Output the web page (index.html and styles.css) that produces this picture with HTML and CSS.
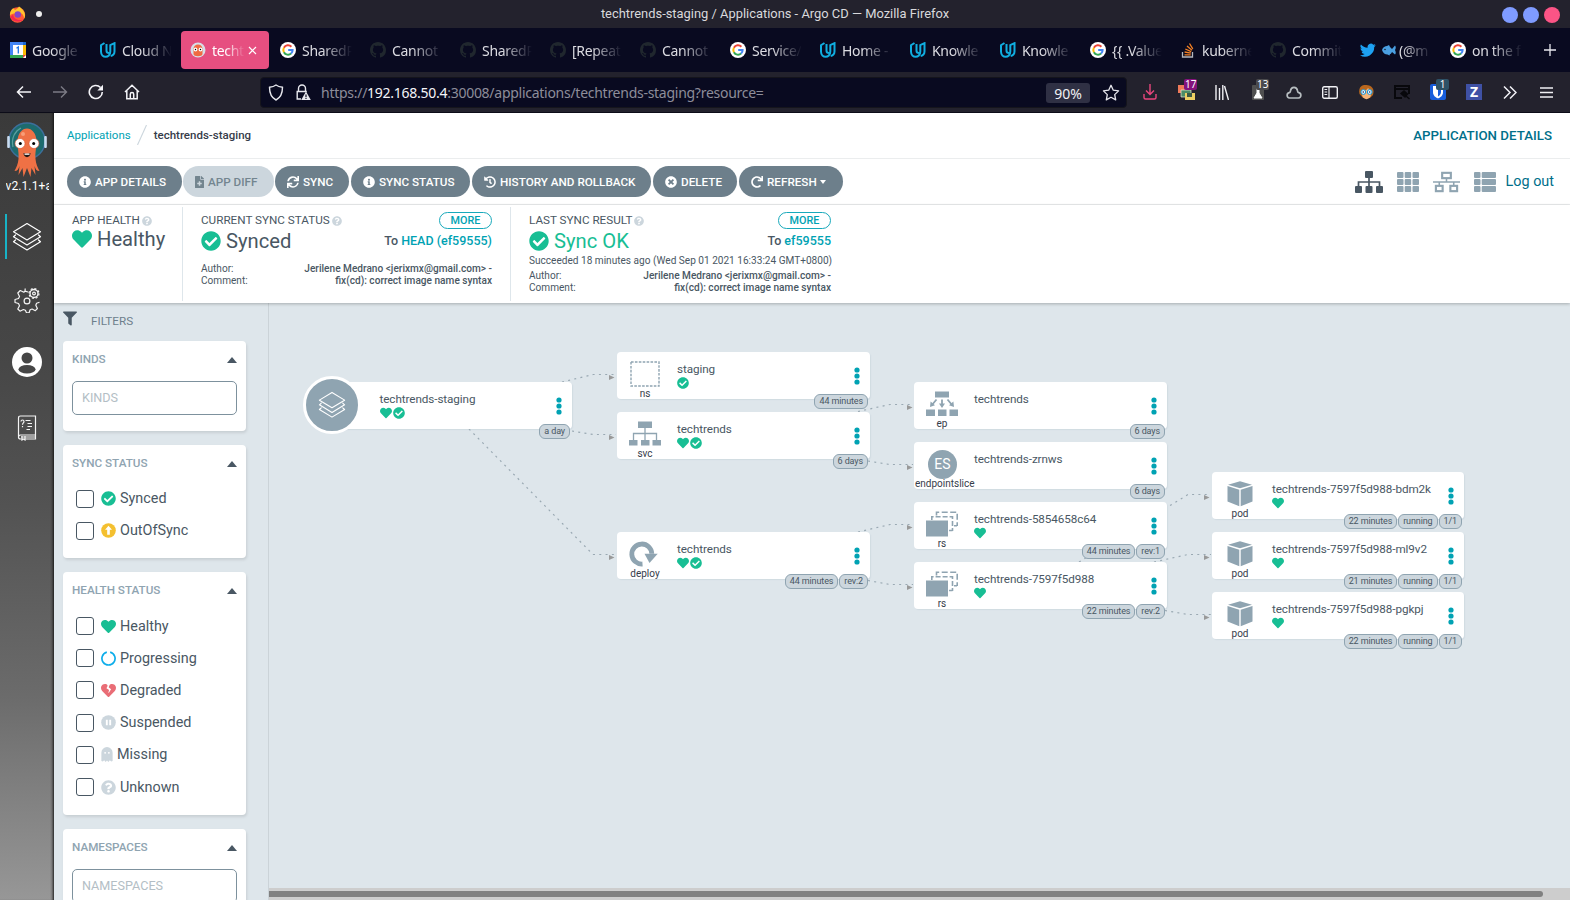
FILE: index.html
```html
<!DOCTYPE html>
<html lang="en">
<head>
<meta charset="utf-8">
<title>techtrends-staging / Applications - Argo CD</title>
<link rel="stylesheet" href="styles.css">
</head>
<body>
<svg class="defs" width="0" height="0" aria-hidden="true">
  <symbol id="i-check" viewBox="0 0 512 512"><path d="M504 256c0 136.967-111.033 248-248 248S8 392.967 8 256 119.033 8 256 8s248 111.033 248 248zM227.314 387.314l184-184c6.248-6.248 6.248-16.379 0-22.627l-22.627-22.627c-6.248-6.249-16.379-6.249-22.628 0L216 308.118l-70.059-70.059c-6.248-6.248-16.379-6.248-22.628 0l-22.627 22.627c-6.248 6.248-6.248 16.379 0 22.627l104 104c6.249 6.249 16.379 6.249 22.628.001z"/></symbol>
  <symbol id="i-heart" viewBox="0 0 512 512"><path d="M462.3 62.6C407.5 15.9 326 24.3 275.7 76.2L256 96.5l-19.7-20.3C186.1 24.3 104.5 15.9 49.7 62.6c-62.8 53.6-66.1 149.8-9.9 207.9l193.5 199.8c12.5 12.9 32.8 12.9 45.3 0l193.5-199.8c56.3-58.1 53-154.3-9.8-207.9z"/></symbol>
  <symbol id="i-broken" viewBox="0 0 512 512"><path d="M462.3 62.6C407.5 15.9 326 24.3 275.7 76.2L256 96.5l-19.7-20.3C186.1 24.3 104.5 15.9 49.7 62.6c-62.8 53.6-66.1 149.8-9.9 207.9l193.5 199.8c12.5 12.9 32.8 12.9 45.3 0l193.5-199.8c56.3-58.1 53-154.3-9.8-207.9z"/><path d="M300 50l-40 96 84 64-80 130-12-20 24-84-90-60 42-86-28-50 30 10 20 26z" fill="#fff"/></symbol>
  <symbol id="i-info" viewBox="0 0 512 512"><path d="M256 8C119.043 8 8 119.083 8 256c0 136.997 111.043 248 248 248s248-111.003 248-248C504 119.083 392.957 8 256 8zm0 110c23.196 0 42 18.804 42 42s-18.804 42-42 42-42-18.804-42-42 18.804-42 42-42zm56 254c0 6.627-5.373 12-12 12h-88c-6.627 0-12-5.373-12-12v-24c0-6.627 5.373-12 12-12h12v-64h-12c-6.627 0-12-5.373-12-12v-24c0-6.627 5.373-12 12-12h64c6.627 0 12 5.373 12 12v100h12c6.627 0 12 5.373 12 12v24z"/></symbol>
  <symbol id="i-times" viewBox="0 0 512 512"><path d="M256 8C119 8 8 119 8 256s111 248 248 248 248-111 248-248S393 8 256 8zm121.6 313.1c4.7 4.7 4.7 12.3 0 17L338 377.6c-4.7 4.7-12.3 4.7-17 0L256 312l-65.1 65.6c-4.7 4.7-12.3 4.7-17 0L134.4 338c-4.7-4.7-4.7-12.3 0-17l65.6-65-65.6-65.1c-4.7-4.7-4.7-12.3 0-17l39.6-39.6c4.7-4.7 12.3-4.7 17 0l65 65.7 65.1-65.6c4.7-4.7 12.3-4.7 17 0l39.6 39.6c4.7 4.7 4.7 12.3 0 17L312 256l65.6 65.1z"/></symbol>
  <symbol id="i-redo" viewBox="0 0 512 512"><path d="M500.33 0h-47.41a12 12 0 0 0-12 12.57l4 82.76A247.42 247.42 0 0 0 256 8C119.34 8 7.9 119.53 8 256.19 8.1 393.07 119.1 504 256 504a247.1 247.1 0 0 0 166.18-63.91 12 12 0 0 0 .48-17.43l-34-34a12 12 0 0 0-16.38-.55A176 176 0 1 1 402.1 157.8l-101.53-4.87a12 12 0 0 0-12.57 12v47.41a12 12 0 0 0 12 12h200.33a12 12 0 0 0 12-12V12a12 12 0 0 0-12-12z"/></symbol>
  <symbol id="i-sync" viewBox="0 0 512 512"><path d="M440.65 12.57l4 82.77A247.16 247.16 0 0 0 255.83 8C134.73 8 33.91 94.92 12.29 209.82A12 12 0 0 0 24.09 224h49.05a12 12 0 0 0 11.67-9.26 175.91 175.91 0 0 1 317-56.94l-101.46-4.86a12 12 0 0 0-12.57 12v47.41a12 12 0 0 0 12 12H500a12 12 0 0 0 12-12V12a12 12 0 0 0-12-12h-47.37a12 12 0 0 0-11.98 12.57zM255.83 432a175.61 175.61 0 0 1-146-77.8l101.8 4.87a12 12 0 0 0 12.57-12v-47.4a12 12 0 0 0-12-12H12a12 12 0 0 0-12 12V500a12 12 0 0 0 12 12h47.35a12 12 0 0 0 12-12.6l-4.15-82.57A247.17 247.17 0 0 0 255.83 504c121.11 0 221.93-86.92 243.55-201.82a12 12 0 0 0-11.8-14.18h-49.05a12 12 0 0 0-11.67 9.26A175.86 175.86 0 0 1 255.83 432z"/></symbol>
  <symbol id="i-history" viewBox="0 0 512 512"><path d="M504 255.531c.253 136.64-111.18 248.372-247.82 248.468-59.015.042-113.223-20.53-155.822-54.911-11.077-8.94-11.905-25.541-1.839-35.607l11.267-11.267c8.609-8.609 22.353-9.551 31.891-1.984C173.062 425.135 212.781 440 256 440c101.705 0 184-82.311 184-184 0-101.705-82.311-184-184-184-48.814 0-93.149 18.969-126.068 49.932l50.754 50.754c10.08 10.08 2.941 27.314-11.313 27.314H24c-8.837 0-16-7.163-16-16V38.627c0-14.254 17.234-21.393 27.314-11.314l49.372 49.372C129.209 34.136 189.552 8 256 8c136.81 0 247.747 110.78 248 247.531zm-180.912 78.784l9.823-12.63c8.138-10.463 6.253-25.542-4.21-33.679L288 256.349V152c0-13.255-10.745-24-24-24h-16c-13.255 0-24 10.745-24 24v135.651l65.409 50.874c10.463 8.137 25.541 6.253 33.679-4.21z"/></symbol>
  <symbol id="i-file" viewBox="0 0 384 512"><path d="M377 105L279.1 7c-4.5-4.5-10.6-7-17-7H256v128h128v-6.1c0-6.3-2.5-12.4-7-16.9zM224 136V0H24C10.7 0 0 10.7 0 24v464c0 13.3 10.7 24 24 24h336c13.3 0 24-10.7 24-24V160H248c-13.2 0-24-10.8-24-24zm64 160v48c0 4.400-3.600 8-8 8h-56v56c0 4.400-3.600 8-8 8h-48c-4.400 0-8-3.600-8-8v-56h-56c-4.400 0-8-3.600-8-8v-48c0-4.400 3.600-8 8-8h56v-56c0-4.400 3.600-8 8-8h48c4.400 0 8 3.600 8 8v56h56c4.400 0 8 3.600 8 8z"/></symbol>
  <symbol id="i-filter" viewBox="0 0 512 512"><path d="M487.976 0H24.028C2.71 0-8.047 25.866 7.058 40.971L192 225.941V432c0 7.831 3.821 15.17 10.237 19.662l80 55.98C298.02 518.69 320 507.493 320 487.98V225.941l184.947-184.97C520.021 25.896 509.338 0 487.976 0z"/></symbol>
  <symbol id="i-question" viewBox="0 0 512 512"><path d="M504 256c0 136.997-111.043 248-248 248S8 392.997 8 256C8 119.083 119.043 8 256 8s248 111.083 248 248zM262.655 90c-54.497 0-89.255 22.957-116.549 63.758-3.536 5.286-2.353 12.415 2.715 16.258l34.699 26.31c5.205 3.947 12.621 3.008 16.665-2.122 17.864-22.658 30.113-35.797 57.303-35.797 20.429 0 45.698 13.148 45.698 32.958 0 14.976-12.363 22.667-32.534 33.976C247.128 238.528 216 254.941 216 296v4c0 6.627 5.373 12 12 12h56c6.627 0 12-5.373 12-12v-1.333c0-28.462 83.186-29.647 83.186-106.667 0-58.002-60.165-102-116.531-102zM256 338c-25.365 0-46 20.635-46 46 0 25.364 20.635 46 46 46s46-20.636 46-46c0-25.365-20.635-46-46-46z"/></symbol>
  <symbol id="i-up" viewBox="0 0 16 16"><circle cx="8" cy="8" r="7.8"/><path d="M8 3L4.300 7.300h2.300v5.200h2.800V7.300h2.300z" fill="#fff"/></symbol>
  <symbol id="i-pause" viewBox="0 0 16 16"><circle cx="8" cy="8" r="7.800"/><path d="M5.200 5h2v6h-2zM8.800 5h2v6h-2z" fill="#fff"/></symbol>
  <symbol id="i-notch" viewBox="0 0 16 16"><path d="M6.200 1.200A7 7 0 1 0 9.800 1.200" fill="none" stroke="#0dadea" stroke-width="1.800"/></symbol>
  <symbol id="i-ghost" viewBox="0 0 12 16"><path d="M0 15V6a6 6 0 0 1 12 0v9l-1.500.500-1.500-1.500-1.500 2L6 14.500 4.500 16 3 14l-1.500 1.500z"/><circle cx="4" cy="6.200" r="1" fill="#fff"/><circle cx="8" cy="6.200" r="1" fill="#fff"/></symbol>
  <symbol id="i-layers" viewBox="0 0 30 30"><g fill="none" stroke="#fff" stroke-width="1.200" stroke-linejoin="round" stroke-linecap="round"><path d="M15 1.500L28.500 9.800 15 18 1.500 9.800zM3.500 13L1.500 14.800 15 23l13.500-8.200L26.500 13M3.500 18L1.500 19.800 15 28l13.500-8.200L26.500 18"/></g></symbol>
  <symbol id="i-udacity" viewBox="0 0 16 16"><path d="M4.500 1L1 3.200v6.300c0 7 9.300 7 9.300 0V3.200L14.500 1.200v8.300c0 2.600-1.600 4-3.800 4.600M6.500 2v6.800c0 1.600 1.200 2.300 2.600 2.300" fill="none" stroke="#10aee0" stroke-width="2"/></symbol>
  <symbol id="i-github" viewBox="0 0 16 16"><path fill="#20272e" d="M8 0C3.580 0 0 3.580 0 8c0 3.540 2.290 6.530 5.470 7.590.4.070.55-.17.55-.38 0-.19-.01-.82-.01-1.490-2.010.37-2.530-.49-2.690-.94-.09-.23-.48-.94-.82-1.130-.28-.15-.68-.52-.01-.53.63-.01 1.080.58 1.230.82.72 1.210 1.870.87 2.330.66.07-.52.28-.87.51-1.070-1.780-.2-3.640-.89-3.640-3.950 0-.87.31-1.590.82-2.150-.08-.2-.36-1.020.08-2.120 0 0 .67-.21 2.200.82.64-.18 1.320-.27 2-.27s1.360.09 2 .27c1.530-1.040 2.200-.82 2.200-.82.44 1.100.16 1.920.08 2.120.51.56.82 1.270.82 2.150 0 3.070-1.870 3.750-3.650 3.950.29.25.54.73.54 1.480 0 1.070-.01 1.930-.01 2.200 0 .21.15.46.55.38A8.010 8.010 0 0 0 16 8c0-4.420-3.580-8-8-8z"/></symbol>
  <symbol id="i-google" viewBox="0 0 16 16"><circle cx="8" cy="8" r="8" fill="#fff"/><g fill="none" stroke-width="2"><path d="M11.400 4.700A4.700 4.700 0 0 0 3.900 5.800" stroke="#ea4335"/><path d="M3.900 5.800a4.700 4.700 0 0 0 0 4.400" stroke="#fbbc05"/><path d="M3.900 10.200a4.700 4.700 0 0 0 7.200 1.400" stroke="#34a853"/><path d="M11.100 11.600A4.700 4.700 0 0 0 12.600 8H8.200" stroke="#4285f4"/></g></symbol>
  <symbol id="i-ns" viewBox="0 0 32 26"><rect x="2" y="1" width="28" height="24" fill="none" stroke="#8fa4b1" stroke-width="1.400" stroke-dasharray="2.600 1.300"/></symbol>
  <symbol id="i-svc" viewBox="0 0 32 26"><path fill="#8fa4b1" d="M9 .500h14v6.500H9zM0 19h8.500v5.500H0zM12 19h8.500v5.500H12zM23.500 19H32v5.500h-8.500z"/><path d="M16 6v13M4.500 19v-6.500h23V19" fill="none" stroke="#8fa4b1" stroke-width="1.300"/></symbol>
  <symbol id="i-ep" viewBox="0 0 32 26"><path fill="#8fa4b1" d="M9 .500h14v6H9zM0 18.500h9V25H0zM12 18.500h8.500V25H12zM23.500 18.500H32V25h-8.500zM4 16l.6-5.500 4.400 3.800zM28 16l-.6-5.500-4.400 3.800zM13 12.500h6L16 17z"/><path d="M10.500 8.500l-5 6M16 8.500v5M21.500 8.500l5 6" fill="none" stroke="#8fa4b1" stroke-width="1.800"/></symbol>
  <symbol id="i-rs" viewBox="0 0 32 26"><g fill="none" stroke="#8fa4b1" stroke-width="1.600"><path d="M10.500 4.500V1.200H31.200V15" stroke-dasharray="6 2.500"/><path d="M5.800 9V5.800H26.500V20" stroke-dasharray="5 2"/><path d="M23 19.500h3.500M28 14.800h3"/></g><path fill="#8fa4b1" d="M0 9.500h22v16H0z"/></symbol>
  <symbol id="i-deploy" viewBox="0 0 32 26"><path d="M13.500 23A10 10 0 1 1 22.800 12.800" fill="none" stroke="#8fa4b1" stroke-width="4.800"/><path d="M15.500 12.800h13.200L20.500 22z" fill="#8fa4b1"/></symbol>
  <symbol id="i-pod" viewBox="0 0 32 26"><path fill="#8fa4b1" d="M16 .300l12 3.400-12 3.600L4 3.700zM3.500 5l11.800 3.700V25.300L3.500 20.500zM28.500 5L16.700 8.700v16.600l11.800-4.800z"/></symbol>
  <symbol id="i-dots" viewBox="0 0 6 18"><circle cx="3" cy="3" r="2.600"/><circle cx="3" cy="9" r="2.600"/><circle cx="3" cy="15" r="2.600"/></symbol>
</svg>

<header class="titlebar">
  <div class="title-left">
    <svg width="17" height="17" viewBox="0 0 17 17"><circle cx="8.500" cy="9" r="7.700" fill="#ff5a36"/><path d="M1 9C1 4 4 3 4 2l2 2c2-1 3-2 4-3.500 3 2 6 5 6 9 0 2-1 3-1 3 0-4-3-6-6-6-3 1-5 1-8 2.500z" fill="#ffc52e"/><path d="M1.500 11c2 5 9 6 12.500 2.500-4 1.500-9 0-10-5z" fill="#f5284e"/><circle cx="8.800" cy="8.500" r="3.200" fill="#8347c9"/></svg>
    <span class="pin"></span>
  </div>
  <div class="window-title">techtrends-staging / Applications - Argo CD — Mozilla Firefox</div>
  <div class="window-buttons"><span></span><span></span><span class="close"></span></div>
</header>

<nav class="tabs">
  <div class="tab"><svg width="16" height="16" viewBox="0 0 16 16"><path d="M0 0h16v16H0z" fill="#fff"/><path d="M0 0h13v3H3v10H0z" fill="#4285f4"/><path d="M13 3h3v10h-3z" fill="#fbbc04"/><path d="M13 0h3v3h-3z" fill="#1967d2"/><path d="M0 13h13v3H0z" fill="#34a853"/><path d="M13 13h3l-3 3z" fill="#ea4335"/><path d="M6.500 6.200L8.300 5v6.500" fill="none" stroke="#1a73e8" stroke-width="1.300"/></svg><span>Google</span></div>
  <div class="tab"><svg width="16" height="16"><use href="#i-udacity"/></svg><span>Cloud N</span></div>
  <div class="tab active"><svg width="16" height="16" viewBox="0 0 16 16"><circle cx="8" cy="8" r="7.500" fill="#d7dfe8"/><path d="M3.500 7a4.500 4.500 0 0 1 9 0v5c0 3-9 3-9 0z" fill="#ef6b42"/><circle cx="5.500" cy="7.500" r="1.900" fill="#fff"/><circle cx="10.500" cy="7.500" r="1.900" fill="#fff"/><circle cx="5.500" cy="7.500" r=".7"/><circle cx="10.500" cy="7.500" r=".7"/></svg><span>techt</span><svg class="tab-close" width="9" height="9" viewBox="0 0 9 9"><path d="M1 1l7 7M8 1L1 8" stroke="#fff" stroke-width="1.200"/></svg></div>
  <div class="tab"><svg width="16" height="16"><use href="#i-google"/></svg><span>SharedP</span></div>
  <div class="tab"><svg width="16" height="16"><use href="#i-github"/></svg><span>Cannot</span></div>
  <div class="tab"><svg width="16" height="16"><use href="#i-github"/></svg><span>SharedP</span></div>
  <div class="tab"><svg width="16" height="16"><use href="#i-github"/></svg><span>[Repeat</span></div>
  <div class="tab"><svg width="16" height="16"><use href="#i-github"/></svg><span>Cannot</span></div>
  <div class="tab"><svg width="16" height="16"><use href="#i-google"/></svg><span>Service/</span></div>
  <div class="tab"><svg width="16" height="16"><use href="#i-udacity"/></svg><span>Home -</span></div>
  <div class="tab"><svg width="16" height="16"><use href="#i-udacity"/></svg><span>Knowle</span></div>
  <div class="tab"><svg width="16" height="16"><use href="#i-udacity"/></svg><span>Knowle</span></div>
  <div class="tab"><svg width="16" height="16"><use href="#i-google"/></svg><span>{{ .Value</span></div>
  <div class="tab"><svg width="16" height="16" viewBox="0 0 16 16"><path d="M2.500 10v5h10v-5" fill="none" stroke="#b5b8bd" stroke-width="1.300"/><path d="M4.500 12.800h6.200M4.600 10l6.200 1.200M5.300 7l5.900 2.700M7 4l5 4.200M9.500 1.500l3.300 5.300" stroke="#f48024" stroke-width="1.300"/></svg><span>kuberne</span></div>
  <div class="tab"><svg width="16" height="16"><use href="#i-github"/></svg><span>Commit</span></div>
  <div class="tab"><svg width="16" height="16" viewBox="0 0 24 24"><path fill="#1da1f2" d="M23.600 4.900c-.9.400-1.800.7-2.800.8 1-.6 1.800-1.600 2.200-2.700-1 .6-2 1-3.100 1.200a4.900 4.900 0 0 0-8.400 4.500C7.400 8.500 3.800 6.500 1.400 3.600a4.900 4.900 0 0 0 1.500 6.500c-.8 0-1.500-.2-2.200-.6 0 2.300 1.600 4.400 3.900 4.900-.7.200-1.500.2-2.200.1.600 2 2.400 3.400 4.600 3.400A9.900 9.900 0 0 1 0 19.900a13.900 13.900 0 0 0 21.300-12.500c.9-.7 1.700-1.500 2.300-2.500z"/></svg><span class="with-fish"><svg width="14" height="12" viewBox="0 0 14 12"><path d="M0 6c1-3 3-4 5-4l2-1 1 2 2 2 3-3.500c1 1 1 3 0 4.500 1 2 1 4 0 4.500L10 8c-1 1.500-1 2-2 2l-.5 1.500-2-1C3 10.500 1 9 0 6z" fill="#4a9fe0"/><circle cx="3" cy="5.500" r=".8" fill="#123"/></svg>(@m</span></div>
  <div class="tab"><svg width="16" height="16"><use href="#i-google"/></svg><span>on the f</span></div>
  <svg class="new-tab" width="12" height="12" viewBox="0 0 12 12"><path d="M6 0v12M0 6h12" stroke="#e8e8ee" stroke-width="1.300"/></svg>
</nav>

<div class="navbar">
  <div class="nav-buttons">
    <svg width="16" height="16" viewBox="0 0 16 16"><path d="M15 8H1.500M7 2.500L1.500 8 7 13.500" fill="none" stroke="#f4f4f8" stroke-width="1.500"/></svg>
    <svg width="16" height="16" viewBox="0 0 16 16"><path d="M1 8h13.500M9 2.500L14.500 8 9 13.500" fill="none" stroke="#7c7b85" stroke-width="1.400"/></svg>
    <svg width="16" height="16" viewBox="0 0 16 16"><path d="M14.300 8A6.500 6.500 0 1 1 12.500 3.500" fill="none" stroke="#f4f4f8" stroke-width="1.600"/><path d="M15 .800V6.500H9.300z" fill="#f4f4f8"/></svg>
    <svg width="16" height="16" viewBox="0 0 16 16"><path d="M1 8l7-6.800L15 8M2.800 6.500v8.300h10.400V6.500M6.300 14.500v-4.300a1.700 1.700 0 0 1 3.400 0v4.300" fill="none" stroke="#f4f4f8" stroke-width="1.500"/></svg>
  </div>
  <div class="urlbar">
    <svg width="16" height="17" viewBox="0 0 16 17"><path d="M8 1c2 1.500 4 2 6.500 2.300C14.500 9 13 13.500 8 16 3 13.500 1.500 9 1.500 3.300 4 3 6 2.500 8 1z" fill="none" stroke="#e8e8ee" stroke-width="1.400"/></svg>
    <svg class="lock" width="16" height="17" viewBox="0 0 16 17"><path d="M3.500 7V4.500a3 3 0 0 1 7 0V7M6 15H2.200V7.500h9.600" fill="none" stroke="#e8e8ee" stroke-width="1.400"/><path d="M11 7.500L15.800 16H6.200z" fill="#e8e8ee"/><path d="M11 10.500v2.800M11 14v1" stroke="#0a0a20" stroke-width="1.200"/></svg>
    <div class="url">https://<b>192.168.50.4</b>:30008/applications/techtrends-staging?resource=</div>
    <span class="zoom">90%</span>
    <svg width="18" height="17" viewBox="0 0 18 17"><path d="M9 1.300l2.300 4.900 5.300.7-3.900 3.700 1 5.300L9 13.300l-4.700 2.600 1-5.300L1.400 6.900l5.300-.7z" fill="none" stroke="#e8e8ee" stroke-width="1.300" stroke-linejoin="round"/></svg>
  </div>
  <div class="extensions">
    <div class="ext"><svg width="14" height="16" viewBox="0 0 14 16"><path d="M7 0v10M3 6.500l4 4 4-4M1 10v3.500q0 1.500 1.500 1.500h9q1.500 0 1.500-1.500V10" fill="none" stroke="#e9467c" stroke-width="1.400"/></svg></div>
    <div class="ext"><svg width="17" height="16" viewBox="0 0 17 16"><path d="M0 1h9v8H0z" fill="#ef7a5a"/><path d="M3 6h10v7H3z" fill="#4c8c66" stroke="#f0ead8" stroke-width=".7"/><path d="M7 9h10v7H7z" fill="#edcf63"/><path d="M9 9h5v4H9z" fill="#3d5945"/></svg><span class="count purple">17</span></div>
    <div class="ext"><svg width="14" height="15" viewBox="0 0 14 15"><path d="M1 0v15M4.500 3v12M7.800 0v15M9.500 1l4 14" stroke="#f0f0f4" stroke-width="1.400"/></svg></div>
    <div class="ext"><svg width="12" height="15" viewBox="0 0 12 15"><rect width="12" height="15" rx="1" fill="#505050"/><path d="M4 4h4M5 5v3l-3 5h8L7 8V5z" fill="#fff" stroke="#fff"/></svg><span class="count grey">13</span></div>
    <div class="ext"><svg width="16" height="13" viewBox="0 0 16 13"><path d="M3.500 12a2.700 2.700 0 0 1-.3-5.300c1-.3 1-1 1.300-2C5.300.300 10.700.300 11.500 4.700c.3 1 .3 1.700 1.300 2a2.700 2.700 0 0 1-.3 5.300z" fill="none" stroke="#b7bdc0" stroke-width="1.700"/></svg></div>
    <div class="ext"><svg width="16" height="13" viewBox="0 0 16 13"><rect x=".7" y=".7" width="14.600" height="11.600" rx="1.500" fill="none" stroke="#f0f0f4" stroke-width="1.400"/><path d="M7 1v11M2.500 3.500h2.700M2.500 6h2.700M2.500 8.500h2.700" stroke="#f0f0f4" stroke-width="1.200"/></svg></div>
    <div class="ext"><svg width="15" height="16" viewBox="0 0 15 16"><path d="M.5 10C-1 3 3 .5 7.500 1S16 4 14 11l-3 3H4z" fill="#b8671e"/><path d="M3 7c3 0 5-1 6-3l3 3v4c-1 5.500-8 5.500-9 0z" fill="#f6b57a"/><circle cx="4.300" cy="8" r="2.400" fill="#e9f7ff" stroke="#1594d6"/><circle cx="10.700" cy="8" r="2.400" fill="#e9f7ff" stroke="#1594d6"/><circle cx="4.300" cy="8" r=".8" fill="#225"/><circle cx="10.700" cy="8" r=".8" fill="#225"/></svg></div>
    <div class="ext"><svg width="16" height="15" viewBox="0 0 16 15"><path d="M8 13H1V1h14v8M1 4h14" fill="none" stroke="#08080c" stroke-width="2"/><path d="M7 8.500l3-2.500 3.500 3-2.500 3zM12 11l3.500 3" fill="#08080c" stroke="#08080c" stroke-width="1.500"/></svg></div>
    <div class="ext"><svg width="16" height="16" viewBox="0 0 16 16"><rect width="16" height="16" rx="2" fill="#175ddc"/><path d="M3 2h10v6c0 4-3 5.500-5 6.500C6 13.500 3 12 3 8z" fill="#fff"/><path d="M8 4h3v4c0 2.500-1.500 3.500-3 4.500z" fill="#175ddc"/></svg><span class="count teal">1</span></div>
    <div class="ext"><span class="z-icon">Z</span></div>
    <div class="ext"><svg width="14" height="13" viewBox="0 0 14 13"><path d="M1 .500l6 6-6 6M7 .500l6 6-6 6" fill="none" stroke="#f0f0f4" stroke-width="1.500"/></svg></div>
    <div class="ext"><svg width="13" height="11" viewBox="0 0 13 11"><path d="M0 1h13M0 5.500h13M0 10h13" stroke="#f0f0f4" stroke-width="1.400"/></svg></div>
  </div>
</div>

<div class="app">
  <aside class="sidebar">
    <svg class="logo" width="42" height="56" viewBox="0 0 42 56"><circle cx="21" cy="20" r="18" fill="#1d6b6e" stroke="#3c6f9b" stroke-width="1.500"/><rect x="1.200" y="15" width="2.600" height="12" rx="1" fill="#c9dcf0"/><rect x="38.200" y="15" width="2.600" height="12" rx="1" fill="#c9dcf0"/><path d="M7 26C5 17 9 10 15 7" fill="none" stroke="#59a0a0" stroke-width="1.200"/><path d="M11.500 21c0-18 19-18 19 0 0 6-1.500 10-1 17 .5 5 2 8 4 12-3 0-4-2-5-5l1 9-4-7-1 9-3.500-9-3.500 9-1-9-4 7 1-9c-1 3-2 5-5 5 2-4 3.500-7 4-12 .5-7-1-11-1-17z" fill="#ef7145"/><circle cx="17" cy="13" r="2" fill="#f89d78"/><circle cx="14" cy="22.500" r="5" fill="#fff" stroke="#d9502b" stroke-width=".6"/><circle cx="28" cy="22.500" r="5" fill="#fff" stroke="#d9502b" stroke-width=".6"/><circle cx="14.300" cy="22.500" r="1.500"/><circle cx="27.700" cy="22.500" r="1.500"/><path d="M17.500 32c2 1 5 1 7 0 0 5.500-7 5.500-7 0z" fill="#231815"/><path d="M18.500 32.500h5v1.300h-5z" fill="#fff"/></svg>
    <div class="version">v2.1.1+a</div>
    <div class="side-item current"><svg width="30" height="30"><use href="#i-layers"/></svg></div>
    <div class="side-item gear"><svg width="26" height="26" viewBox="0 0 26 26"><g fill="none" stroke="#f4f4f4" stroke-width="1.200" stroke-linejoin="round"><path d="M11 4.200L11.200 1.500M14 5l-3-.8-1.200 1L6.300 3.500 3.800 6l1.700 3.500-1 2L1 12.500v3l3.500 1 1 2.200L3.800 22 6 24.200l3.400-1.700 2 .8 1.100 2.500h2.600l1-3 2-.8 3.200 1.700 2.100-2.200-1.600-3.300.8-2 2.900-1"/><circle cx="13" cy="14" r="2.900"/><circle cx="20" cy="6.500" r="4" stroke-width="1.400"/><circle cx="20" cy="6.500" r="5" stroke-dasharray="2 1.900"/><circle cx="20" cy="6.500" r="1.400"/></g></svg></div>
    <div class="side-item user"><svg width="30" height="30" viewBox="0 0 30 30"><circle cx="15" cy="15" r="15" fill="#fff"/><circle cx="15" cy="11" r="5.500" fill="#464646"/><ellipse cx="15" cy="22.300" rx="8.500" ry="4.300" fill="#464646"/></svg></div>
    <div class="side-item book"><svg width="20" height="26" viewBox="0 0 20 26"><g fill="none" stroke="#f4f4f4" stroke-width="1.200"><path d="M1.500 21.500V3Q1.500 1 3.500 1h15v19H3.500q-2 0-2 2.300 0 1.700 2 1.700h15v-4M4 22h14.500M5 21v4l1.500-1 1.500 1v-4M8.500 5.500h5M10.500 8.500h4.500M10.500 11.500h4.500M9.500 14.500h3.500"/><path d="M4 6.500c0-2 3-2 3 0 0 1.500-1.500 1.200-1.500 3.300M5.500 11v1.300"/></g></svg></div>
  </aside>

  <main class="main">
    <div class="breadcrumbs">
      <a class="crumb-link">Applications</a>
      <svg width="12" height="20" viewBox="0 0 12 20"><path d="M1.500 20L10.500 0" stroke="#ccd6dd" stroke-width="1.100"/></svg>
      <span class="crumb-current">techtrends-staging</span>
      <span class="page-title">APPLICATION DETAILS</span>
    </div>

    <div class="toolbar">
      <button class="btn w-details"><svg width="12" height="12"><use href="#i-info"/></svg>APP DETAILS</button>
      <button class="btn w-diff disabled"><svg class="narrow" width="9" height="12"><use href="#i-file"/></svg>APP DIFF</button>
      <button class="btn w-sync"><svg width="12" height="12"><use href="#i-sync"/></svg>SYNC</button>
      <button class="btn w-status"><svg width="12" height="12"><use href="#i-info"/></svg>SYNC STATUS</button>
      <button class="btn w-history"><svg width="12" height="12"><use href="#i-history"/></svg>HISTORY AND ROLLBACK</button>
      <button class="btn w-delete"><svg width="12" height="12"><use href="#i-times"/></svg>DELETE</button>
      <button class="btn w-refresh"><svg width="12" height="12"><use href="#i-redo"/></svg>REFRESH<i class="caret"></i></button>
      <div class="views">
        <svg width="28" height="22" viewBox="0 0 28 22"><g fill="#495763"><rect x="10" width="8" height="7" rx="1"/><rect y="15" width="7" height="7" rx="1"/><rect x="10.500" y="15" width="7" height="7" rx="1"/><rect x="21" y="15" width="7" height="7" rx="1"/></g><path d="M14 7v8M3.500 15v-4h21v4" fill="none" stroke="#495763" stroke-width="1.700"/></svg>
        <svg width="22" height="20" viewBox="0 0 22 20"><g fill="#8fa4b1"><rect width="6.500" height="6" rx="1"/><rect x="7.700" width="6.500" height="6" rx="1"/><rect x="15.500" width="6.500" height="6" rx="1"/><rect y="7" width="6.500" height="6" rx="1"/><rect x="7.700" y="7" width="6.500" height="6" rx="1"/><rect x="15.500" y="7" width="6.500" height="6" rx="1"/><rect y="14" width="6.500" height="6" rx="1"/><rect x="7.700" y="14" width="6.500" height="6" rx="1"/><rect x="15.500" y="14" width="6.500" height="6" rx="1"/></g></svg>
        <svg width="27" height="22" viewBox="0 0 28 22"><g fill="none" stroke="#8fa4b1" stroke-width="2.200"><rect x="9.500" y="1.500" width="9" height="5.500"/><rect x="3" y="15" width="7" height="5.500"/><rect x="18" y="15" width="7" height="5.500"/><path d="M0 11h28M14 7v4M6.500 11v4M21.500 11v4" stroke-width="1.600"/></g></svg>
        <svg width="22" height="20" viewBox="0 0 22 20"><g fill="#8fa4b1"><rect width="6.500" height="6" rx="1"/><rect x="7.700" width="14.300" height="6" rx="1"/><rect y="7" width="6.500" height="6" rx="1"/><rect x="7.700" y="7" width="14.300" height="6" rx="1"/><rect y="14" width="6.500" height="6" rx="1"/><rect x="7.700" y="14" width="14.300" height="6" rx="1"/></g></svg>
      </div>
      <a class="logout">Log out</a>
    </div>

    <div class="status">
      <section class="panel health">
        <div class="label">APP HEALTH<svg width="10" height="10"><use href="#i-question"/></svg></div>
        <div class="value"><svg class="green" width="20" height="20"><use href="#i-heart"/></svg>Healthy</div>
      </section>
      <section class="panel current-sync">
        <div class="row"><div class="label">CURRENT SYNC STATUS<svg width="10" height="10"><use href="#i-question"/></svg></div><span class="more">MORE</span></div>
        <div class="row second"><div class="value"><svg class="green" width="20" height="20"><use href="#i-check"/></svg>Synced</div><div class="target">To <em>HEAD (ef59555)</em></div></div>
        <div class="row meta first-meta"><span>Author:</span><b>Jerilene Medrano &lt;jerixmx@gmail.com&gt; -</b></div>
        <div class="row meta"><span>Comment:</span><b>fix(cd): correct image name syntax</b></div>
      </section>
      <section class="panel last-sync">
        <div class="row"><div class="label">LAST SYNC RESULT<svg width="10" height="10"><use href="#i-question"/></svg></div><span class="more">MORE</span></div>
        <div class="row second"><div class="value ok"><svg class="green" width="20" height="20"><use href="#i-check"/></svg>Sync OK</div><div class="target">To <em>ef59555</em></div></div>
        <div class="row meta when"><span>Succeeded 18 minutes ago (Wed Sep 01 2021 16:33:24 GMT+0800)</span></div>
        <div class="row meta"><span>Author:</span><b>Jerilene Medrano &lt;jerixmx@gmail.com&gt; -</b></div>
        <div class="row meta"><span>Comment:</span><b>fix(cd): correct image name syntax</b></div>
      </section>
    </div>

    <div class="content">
      <div class="filters">
        <div class="filters-head"><svg width="14" height="15"><use href="#i-filter"/></svg>FILTERS</div>
        <section class="card kinds"><h3>KINDS<i></i></h3><div class="input">KINDS</div></section>
        <section class="card sync"><h3>SYNC STATUS<i></i></h3>
          <label class="check"><span class="box"></span><svg class="green" width="15" height="15"><use href="#i-check"/></svg>Synced</label>
          <label class="check"><span class="box"></span><svg class="yellow" width="15" height="15"><use href="#i-up"/></svg>OutOfSync</label>
        </section>
        <section class="card healths"><h3>HEALTH STATUS<i></i></h3>
          <label class="check"><span class="box"></span><svg class="green" width="15" height="15"><use href="#i-heart"/></svg>Healthy</label>
          <label class="check"><span class="box"></span><svg width="15" height="15"><use href="#i-notch"/></svg>Progressing</label>
          <label class="check"><span class="box"></span><svg class="red" width="15" height="15"><use href="#i-broken"/></svg>Degraded</label>
          <label class="check"><span class="box"></span><svg class="pale" width="15" height="15"><use href="#i-pause"/></svg>Suspended</label>
          <label class="check"><span class="box"></span><svg class="pale ghost" width="12" height="15"><use href="#i-ghost"/></svg>Missing</label>
          <label class="check"><span class="box"></span><svg class="pale" width="15" height="15"><use href="#i-question"/></svg>Unknown</label>
        </section>
        <section class="card namespaces"><h3>NAMESPACES<i></i></h3><div class="input">NAMESPACES</div></section>
      </div>

      <div class="canvas">
        <svg class="edges" width="1300" height="585" viewBox="270 303 1300 585">
          <g fill="none" stroke="#9aa9b3" stroke-width="1.200" stroke-dasharray="2 4.300">
            <path d="M562 382L593 374.500H616M572 431L593 434.500H616M469 429L593 554.500H616"/>
            <path d="M858 411.500L890 404.500H913M868 461L890 464.500H913M858 532L890 524.500H913M868 580.500L890 584.500H913"/>
            <path d="M1079 562L1188 494.500H1211M1154 562L1188 554.500H1211M1165 610.500L1188 614.500H1211"/>
          </g>
          <g fill="#999"><path d="M609 375l5.500 2.500-5.500 2.500zM609 435l5.500 2.500-5.500 2.500zM609 555l5.500 2.500-5.500 2.500zM907 405l5.500 2.500-5.500 2.500zM907 465l5.500 2.500-5.500 2.500zM907 525l5.500 2.500-5.500 2.500zM907 585l5.500 2.500-5.500 2.500zM1204 495l5.500 2.500-5.500 2.500zM1204 555l5.500 2.500-5.500 2.500zM1204 615l5.500 2.500-5.500 2.500z"/></g>
        </svg>

        <div class="node root c0 r1"><span class="disc"><svg width="28" height="28"><use href="#i-layers"/></svg></span><div class="info">techtrends-staging<span class="marks"><svg><use href="#i-heart"/></svg><svg><use href="#i-check"/></svg></span></div><svg class="menu"><use href="#i-dots"/></svg><div class="pills"><span>a day</span></div></div>

        <div class="node c1 r0"><div class="kind"><svg><use href="#i-ns"/></svg>ns</div><div class="info">staging<span class="marks"><svg><use href="#i-check"/></svg></span></div><svg class="menu"><use href="#i-dots"/></svg><div class="pills"><span>44 minutes</span></div></div>
        <div class="node c1 r2"><div class="kind"><svg><use href="#i-svc"/></svg>svc</div><div class="info">techtrends<span class="marks"><svg><use href="#i-heart"/></svg><svg><use href="#i-check"/></svg></span></div><svg class="menu"><use href="#i-dots"/></svg><div class="pills"><span>6 days</span></div></div>
        <div class="node c1 r6"><div class="kind"><svg><use href="#i-deploy"/></svg>deploy</div><div class="info">techtrends<span class="marks"><svg><use href="#i-heart"/></svg><svg><use href="#i-check"/></svg></span></div><svg class="menu"><use href="#i-dots"/></svg><div class="pills"><span>44 minutes</span><span>rev:2</span></div></div>

        <div class="node c2 r1"><div class="kind"><svg><use href="#i-ep"/></svg>ep</div><div class="info">techtrends</div><svg class="menu"><use href="#i-dots"/></svg><div class="pills"><span>6 days</span></div></div>
        <div class="node c2 r3"><div class="kind es"><span class="initials">ES</span>endpointslice</div><div class="info">techtrends-zrnws</div><svg class="menu"><use href="#i-dots"/></svg><div class="pills"><span>6 days</span></div></div>
        <div class="node c2 r5"><div class="kind"><svg><use href="#i-rs"/></svg>rs</div><div class="info">techtrends-5854658c64<span class="marks"><svg><use href="#i-heart"/></svg></span></div><svg class="menu"><use href="#i-dots"/></svg><div class="pills"><span>44 minutes</span><span>rev:1</span></div></div>
        <div class="node c2 r7"><div class="kind"><svg><use href="#i-rs"/></svg>rs</div><div class="info">techtrends-7597f5d988<span class="marks"><svg><use href="#i-heart"/></svg></span></div><svg class="menu"><use href="#i-dots"/></svg><div class="pills"><span>22 minutes</span><span>rev:2</span></div></div>

        <div class="node c3 r4"><div class="kind"><svg><use href="#i-pod"/></svg>pod</div><div class="info">techtrends-7597f5d988-bdm2k<span class="marks"><svg><use href="#i-heart"/></svg></span></div><svg class="menu"><use href="#i-dots"/></svg><div class="pills"><span>22 minutes</span><span>running</span><span>1/1</span></div></div>
        <div class="node c3 r6"><div class="kind"><svg><use href="#i-pod"/></svg>pod</div><div class="info">techtrends-7597f5d988-ml9v2<span class="marks"><svg><use href="#i-heart"/></svg></span></div><svg class="menu"><use href="#i-dots"/></svg><div class="pills"><span>21 minutes</span><span>running</span><span>1/1</span></div></div>
        <div class="node c3 r8"><div class="kind"><svg><use href="#i-pod"/></svg>pod</div><div class="info">techtrends-7597f5d988-pgkpj<span class="marks"><svg><use href="#i-heart"/></svg></span></div><svg class="menu"><use href="#i-dots"/></svg><div class="pills"><span>22 minutes</span><span>running</span><span>1/1</span></div></div>

        <div class="scrollbar"><div class="thumb"></div></div>
      </div>
    </div>
  </main>
</div>
</body>
</html>
```
FILE: styles.css
```css
* { box-sizing: border-box; }
body { margin: 0; width: 1570px; height: 900px; overflow: hidden; font-family: Roboto, "Liberation Sans", sans-serif; color: #495763; display: flex; flex-direction: column; }
svg { display: block; flex: none; }
.defs { position: absolute; }
.green { fill: #18be94; }
.yellow { fill: #f4c030; }
.red { fill: #e96d76; }
.pale { fill: #ccd6dd; }

/* browser chrome */
.titlebar { height: 28px; background: #23222d; display: grid; grid-template-columns: 100px 1fr 100px; align-items: center; flex: none; }
.title-left { display: flex; align-items: center; gap: 10px; padding-left: 9px; }
.pin { width: 6px; height: 6px; border-radius: 50%; background: #eee; }
.window-title { text-align: center; color: #d9d9dc; font-size: 12.9px; padding: 0 20px 2px 0; white-space: nowrap; }
.window-buttons { display: flex; justify-content: flex-end; gap: 5px; padding: 2px 10px 0 0; }
.window-buttons span { width: 16px; height: 16px; border-radius: 50%; background: #7f9bff; }
.window-buttons .close { background: #fb5486; }

.tabs { height: 44px; background: #090a20; display: flex; align-items: center; flex: none; font-family: "Noto Sans", sans-serif; font-size: 14px; letter-spacing: -.3px; color: #dcdce2; }
.tab { width: 90px; height: 38px; flex: none; padding: 0 10px; display: flex; align-items: center; gap: 6px; }
.tab > span { flex: 1; min-width: 0; overflow: hidden; white-space: nowrap; margin-right: -2px; -webkit-mask-image: linear-gradient(to right, #000 40%, transparent 100%); mask-image: linear-gradient(to right, #000 40%, transparent 100%); }
.tab.active { width: 88px; margin: 0 1px; padding: 0 12px 0 9px; background: #e64f80; border-radius: 4px; color: #fff; }
.tab.active > span { margin-right: -3px; }
.tab .with-fish { display: flex; align-items: center; gap: 3px; }
.new-tab { margin-left: 14px; }

.navbar { height: 41px; background: #23222d; border-bottom: 1px solid #0c0c18; display: flex; align-items: center; flex: none; }
.nav-buttons { width: 260px; display: flex; gap: 20px; padding-left: 16px; }
.urlbar { width: 867px; height: 31px; background: #090a20; border: 1px solid #15151c; border-radius: 4px; display: flex; align-items: center; padding: 0 6px 0 7px; font-family: "Noto Sans", sans-serif; font-size: 14px; color: #8d8d9a; }
.urlbar .lock { margin: 0 10px 0 11px; }
.url { flex: 1; white-space: nowrap; letter-spacing: -.27px; }
.url b { font-weight: 400; color: #f4f4f8; }
.zoom { background: #2f3044; color: #f0f0f4; border-radius: 3px; width: 44px; height: 20px; line-height: 21px; text-align: center; margin: 1px 12px 0 0; }
.extensions { display: flex; padding-left: 5px; }
.ext { width: 36px; height: 30px; display: flex; align-items: center; justify-content: center; position: relative; }
.count { position: absolute; top: 2px; left: 16px; height: 11px; padding: 0 1px; font: 10px/11px "Noto Sans", sans-serif; color: #fff; border-radius: 2px; min-width: 13px; text-align: center; }
.purple { background: #84127c; }
.grey { background: #4a4a4d; }
.teal { background: #2e5166; }
.z-icon { width: 16px; height: 16px; background: #3f51a5; color: #fff; font: 700 14px/16px "Open Sans", sans-serif; text-align: center; }

/* application frame */
.app { flex: 1; display: flex; min-height: 0; }
.sidebar { width: 54px; background: linear-gradient(#3a3a3a 0, #474747 32%, #535353 50%, #6b6b6b 74%, #979797 100%); box-shadow: inset -3px 0 3px -2px #111; display: flex; flex-direction: column; align-items: center; padding-top: 8px; }
.version { width: 43px; margin-top: 1px; overflow: hidden; white-space: nowrap; color: #fff; font-size: 12px; line-height: 16px; letter-spacing: .1px; }
.side-item { width: 54px; height: 45px; display: flex; align-items: center; justify-content: center; padding-right: 1px; }
.side-item.current { margin-top: 20px; width: 44px; height: 45px; border-left: 2px solid #18b3c6; padding: 1px 3px 0 0; }
.side-item.gear { margin-top: 18px; }
.side-item.user { margin-top: 17px; }
.side-item.book { margin-top: 21px; }

.main { flex: 1; min-width: 0; display: flex; flex-direction: column; background: #fff; }
.breadcrumbs { height: 46px; border-bottom: 1px solid #ebedee; display: flex; align-items: center; padding: 0 17px 1px 13px; font-size: 11.5px; flex: none; }
.crumb-link { color: #00a2b3; margin-right: 5px; }
.crumb-current { margin-left: 6px; color: #363c4a; font-weight: 500; }
.page-title { margin-left: auto; color: #006f8a; font-weight: 500; font-size: 13.3px; margin-right: 1px; }

.toolbar { height: 46px; border-bottom: 1px solid #ebedee; display: flex; align-items: center; padding-left: 13px; flex: none; }
.btn { height: 31px; border: 0; border-radius: 16px; background: #6d7f8b; color: #fff; font: 500 11.7px Roboto, sans-serif; display: flex; align-items: center; gap: 4px; padding: 0 0 0 12px; margin-right: 2px; fill: #fff; white-space: nowrap; flex: none; }
.btn.disabled { background: #ccd6dd; color: #73858f; fill: #73858f; }
.w-details { width: 115px; margin-right: 1px; }
.w-diff { width: 91px; margin-right: 1px; }
.w-sync { width: 74px; }
.w-status { width: 119px; }
.w-history { width: 179px; }
.w-delete { width: 84px; }
.w-refresh { width: 104px; }
.caret { border: 3.500px solid transparent; border-top: 4px solid #fff; border-bottom: 0; margin-left: -1px; }
.views { margin-left: auto; display: flex; align-items: center; gap: 14px; margin-right: 10px; }
.logout { color: #006f8a; font-size: 14.4px; margin-right: 16px; }

.status { height: 98px; display: flex; padding: 2px 0; box-shadow: 0 1px 3px rgba(0,0,0,.25); position: relative; z-index: 1; flex: none; }
.panel { height: 94px; border-right: 1px solid #dee6eb; padding: 6px 18px 0; }
.panel.health { width: 129px; }
.panel.current-sync { width: 328px; }
.panel.last-sync { width: 339px; border: 0; padding-right: 19px; }
.row { display: flex; justify-content: space-between; }
.label { font-size: 11.7px; line-height: 15px; display: flex; align-items: center; gap: 2px; white-space: nowrap; }
.label svg { fill: #ccd6dd; }
.more { height: 17px; width: 53px; margin: -1px 0; border: 1px solid #18a9bb; border-radius: 9px; text-align: center; font-size: 10.800px; line-height: 16px; color: #00a2b3; font-weight: 500; }
.value { font-size: 20.2px; line-height: 24px; display: flex; align-items: center; gap: 5px; white-space: nowrap; }
.health .value { line-height: 22px; }
.row.second { height: 27px; align-items: center; padding-bottom: 2px; }
.ok { color: #18be94; }
.target { font-size: 12.5px; font-weight: 500; }
.target em { font-style: normal; color: #00a2b3; }
.meta { font-size: 10.080px; line-height: 12px; white-space: nowrap; }
.meta b { font-weight: 500; font-size: 10.120px; }
.first-meta { margin-top: 8px; }
.when { line-height: 13px; margin: -1px 0 3px; }

.content { flex: 1; min-height: 0; display: flex; background: #dee6eb; }
.filters { width: 215px; border-right: 1px solid #cbd3d8; padding: 8px 22px 0 9px; overflow: hidden; flex: none; }
.filters-head { height: 20px; display: flex; align-items: center; gap: 14px; font-size: 11.7px; color: #6d7f8b; }
.filters-head svg { fill: #495763; margin-top: -5px; }
.card { background: #fff; border-radius: 4px; box-shadow: 1px 2px 3px rgba(0,0,0,.1); padding: 10px 9px 0; margin-bottom: 14px; }
.filters-head + .card { margin-top: 10px; }
.card h3 { margin: 0; height: 16px; font-size: 11.7px; font-weight: 500; color: #8fa4b1; display: flex; align-items: center; justify-content: space-between; }
.card h3 i { border: 5.500px solid transparent; border-bottom: 6px solid #495763; border-top: 0; margin-top: 2px; }
.kinds { height: 90px; }
.sync { height: 113px; }
.healths { height: 243px; }
.input { height: 34px; margin-top: 14px; border: 1px solid #7d919d; border-radius: 5px; padding-left: 9px; font-size: 12.600px; line-height: 31px; color: #b3bec5; }
.check { display: flex; align-items: center; height: 32.200px; font-size: 14.4px; padding-left: 4px; }
.sync h3 + .check { margin-top: 11.500px; }
.healths h3 + .check { margin-top: 12px; }
.box { width: 18px; height: 18px; border: 1px solid #495763; border-radius: 3px; margin: 0 7px 0 0; }
.check svg { margin-right: 4px; }

/* resource tree */
.canvas { flex: 1; position: relative; overflow: hidden; }
.edges { position: absolute; left: 1px; top: 0; }
.node { position: absolute; width: 253px; height: 47px; background: #fff; border-radius: 4px; box-shadow: 1px 1px 1px rgba(180,195,204,.3); display: flex; }
.c0 { left: 51px; }
.c1 { left: 348px; }
.c2 { left: 645px; }
.c3 { left: 943px; }
.r0 { top: 49px; }
.r1 { top: 79px; }
.r2 { top: 109px; }
.r3 { top: 139px; }
.r4 { top: 169px; }
.r5 { top: 199px; }
.r6 { top: 229px; }
.r7 { top: 259px; }
.r8 { top: 289px; }
.node.c3 { width: 252px; }
.kind { width: 56px; padding-top: 9px; display: flex; flex-direction: column; align-items: center; font-size: 10px; line-height: 12px; color: #363c4a; }
.kind svg { width: 32px; height: 26px; margin-bottom: 1px; }
.kind.es { width: 60px; padding-top: 8px; align-items: flex-start; padding-left: 1px; }
.initials { width: 29px; height: 29px; border-radius: 50%; background: #8fa4b1; color: #fff; font-size: 14px; line-height: 29px; text-align: center; margin: 0 0 -1px 13px; }
.info { flex: 1; padding: 10px 0 0 4px; font-size: 11.7px; line-height: 15px; letter-spacing: -.08px; white-space: nowrap; }
.es + .info { padding-left: 0; }
.marks { display: flex; gap: 1px; fill: #18be94; }
.marks svg { width: 12px; height: 12px; }
.menu { width: 6px; height: 18px; margin: 14.500px 10.500px 0 0; fill: #00a2b3; }
.pills { position: absolute; right: 2px; top: 42px; display: flex; gap: 1px; }
.pills span { height: 15px; border: 1px solid #8fa4b1; border-radius: 6px; background: #ccd6dd; font-size: 9px; line-height: 12px; letter-spacing: -.12px; padding: 0 4px; white-space: nowrap; color: #495763; }
.root { width: 252px; border-radius: 24px 4px 4px 24px; }
.disc { position: absolute; left: -17px; top: -6px; width: 58px; height: 58px; border: 3px solid #fff; border-radius: 50%; background: #8fa4b1; display: flex; align-items: center; justify-content: center; }
.root .info { padding-left: 59.500px; }
.scrollbar { position: absolute; left: 0; right: 0; bottom: 0; height: 12px; background: #cdcdcd; padding: 3px 0; }
.thumb { width: 1274px; height: 6px; background: #808080; border-radius: 0 3px 3px 0; }
```
